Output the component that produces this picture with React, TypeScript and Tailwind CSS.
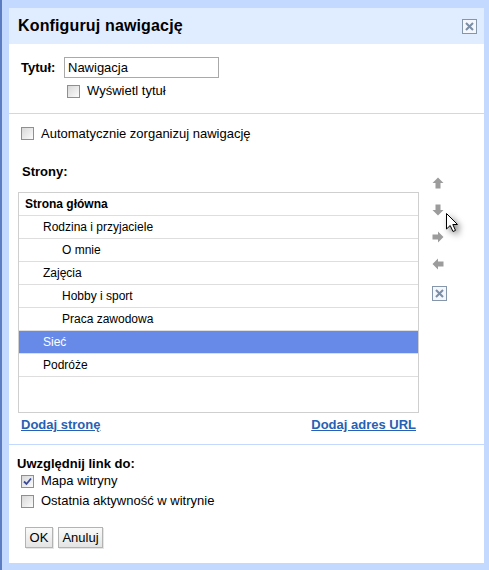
import React from "react";

const font = { fontFamily: '"Liberation Sans", Arial, sans-serif' };

function Checkbox({ checked = false }: { checked?: boolean }) {
  return (
    <span className="relative inline-block w-[13px] h-[13px] border border-[#8e8f8f] bg-gradient-to-br from-[#d8d8d8] to-[#fbfbfb] shrink-0">
      {checked && (
        <svg className="absolute left-[1px] top-[1px]" width="9" height="9" viewBox="0 0 9 9">
          <path d="M1 4.5 L3.5 7 L8 1.5" fill="none" stroke="#3a4a9a" strokeWidth="1.8" />
        </svg>
      )}
    </span>
  );
}

function Arrow({ dir }: { dir: "up" | "down" | "left" | "right" }) {
  const rot = { up: 0, down: 180, right: 90, left: 270 }[dir];
  return (
    <svg width="12" height="12" viewBox="0 0 12 12">
      <g transform={`rotate(${rot} 6 6)`}>
        <path d="M6 0.5 L11.5 6 L8.5 6 L8.5 11.5 L3.5 11.5 L3.5 6 L0.5 6 Z" fill="#9c9c9c" />
      </g>
    </svg>
  );
}

function XBox({ size = 15 }: { size?: number }) {
  return (
    <svg width={size} height={size} viewBox="0 0 15 15">
      <rect x="0.5" y="0.5" width="14" height="14" fill="#f4f7fb" stroke="#8596ab" />
      <path d="M4 4 L11 11 M11 4 L4 11" stroke="#7a8ea6" strokeWidth="2" />
    </svg>
  );
}

const rows: { label: string; level: number; bold?: boolean; selected?: boolean }[] = [
  { label: "Strona główna", level: 0, bold: true },
  { label: "Rodzina i przyjaciele", level: 1 },
  { label: "O mnie", level: 2 },
  { label: "Zajęcia", level: 1 },
  { label: "Hobby i sport", level: 2 },
  { label: "Praca zawodowa", level: 2 },
  { label: "Sieć", level: 1, selected: true },
  { label: "Podróże", level: 1 },
];

const indent = ["pl-[6px]", "pl-[24px]", "pl-[43px]"];

export default function App() {
  return (
    <div style={font} className="w-[489px] h-[570px] bg-[#c3d9ff] border-l-2 border-[#5b7cc0] pt-2 pl-[7px] pr-[5px] pb-[7px] text-[13px] text-black">
      <div className="relative bg-white h-full flex flex-col">
        {/* header */}
        <div className="h-[36px] bg-[#e0ecff] flex items-center justify-between pl-[9px] pr-[7px]">
          <span className="text-[16px] font-bold tracking-[0.15px]">Konfiguruj nawigację</span>
          <XBox />
        </div>

        {/* title section */}
        <div className="h-[69px] pl-3 pt-[13px]">
          <div className="flex items-center h-[21px]">
            <span className="font-bold w-[43px]">Tytuł:</span>
            <div className="w-[155px] h-[21px] border border-[#a9a9a9] flex items-center pl-[3px]">Nawigacja</div>
          </div>
          <div className="flex items-center gap-[7px] ml-[46px] mt-[6px] h-[14px]">
            <Checkbox />
            <span>Wyświetl tytuł</span>
          </div>
        </div>

        <div className="border-t border-[#c3d9ff]" />

        {/* pages section */}
        <div className="h-[330px] pl-[9px] pt-[12px]">
          <div className="flex items-center gap-[7px] ml-[3px] h-[15px]">
            <Checkbox />
            <span>Automatycznie zorganizuj nawigację</span>
          </div>
          <div className="flex mt-[23px]">
            <div className="w-[401px]">
              <div className="font-bold ml-[4px] h-[16px] leading-[16px]">Strony:</div>
              <div className="mt-[12px] h-[221px] border border-[#cfcfcf] text-[12px]">
                {rows.map((r) => (
                  <div
                    key={r.label}
                    className={`h-[23px] border-b border-[#dedede] flex items-center ${indent[r.level]} ${
                      r.selected ? "bg-[#6789e8] text-white" : ""
                    } ${r.bold ? "font-bold" : ""}`}
                  >
                    {r.label}
                  </div>
                ))}
              </div>
              <div className="flex justify-between mt-[4px] pl-[3px] pr-[3px] h-[16px] leading-[16px] font-bold text-[#2761b3] underline">
                <span>Dodaj stronę</span>
                <span>Dodaj adres URL</span>
              </div>
            </div>
            <div className="ml-[13px] mt-[5px] flex flex-col">
              <div className="h-[27px] flex items-center"><Arrow dir="up" /></div>
              <div className="h-[27px] flex items-center"><Arrow dir="down" /></div>
              <div className="h-[27px] flex items-center"><Arrow dir="right" /></div>
              <div className="h-[27px] flex items-center"><Arrow dir="left" /></div>
              <div className="h-[27px] flex items-center mt-[3px]"><XBox /></div>
            </div>
          </div>
        </div>

        <div className="border-t border-[#c3d9ff]" />

        {/* include links */}
        <div className="pl-2 pt-[12px]">
          <div className="font-bold h-[14px] leading-[14px]">Uwzględnij link do:</div>
          <div className="ml-[4px] flex items-center gap-[7px] h-[20px]">
            <Checkbox checked />
            <span>Mapa witryny</span>
          </div>
          <div className="ml-[4px] flex items-center gap-[7px] h-[20px]">
            <Checkbox />
            <span>Ostatnia aktywność w witrynie</span>
          </div>
          <div className="flex gap-[5px] ml-[8px] mt-[16px]">
            <button className="w-[28px] h-[21px] border border-[#b3b3b3] bg-gradient-to-b from-[#fafafa] to-[#e4e4e4] text-[13px] shadow-[1px_1px_0_#e6e6e6]">OK</button>
            <button className="w-[45px] h-[21px] border border-[#b3b3b3] bg-gradient-to-b from-[#fafafa] to-[#e4e4e4] text-[13px] shadow-[1px_1px_0_#e6e6e6]">Anuluj</button>
          </div>
        </div>

        {/* mouse cursor */}
        <svg
          className="absolute left-[437px] top-[205px]"
          width="20"
          height="24"
          viewBox="0 0 20 24"
          style={{ filter: "drop-shadow(3px 3px 3px rgba(0,0,0,0.5))" }}
        >
          <path d="M0.5 0.5 L0.5 16 L4.2 12.5 L7 18.5 L9.5 17.4 L6.8 11.5 L11.5 11.5 Z" fill="#fff" stroke="#000" strokeWidth="1" />
        </svg>
      </div>
    </div>
  );
}
